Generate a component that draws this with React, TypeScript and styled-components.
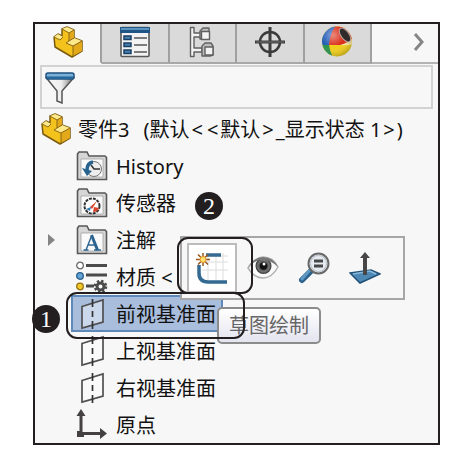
import React, { useState } from "react";
import styled, { createGlobalStyle } from "styled-components";

const GlobalStyle = createGlobalStyle`
  * { box-sizing: border-box; }
  body {
    margin: 0;
    background: #fff;
    color: #111;
    font-family: "Noto Sans", "Noto Sans CJK SC", sans-serif;
    font-size: 20px;
  }
  button { font: inherit; color: inherit; cursor: pointer; }
  svg { display: block; flex: none; }
`;

const Page = styled.main`
  padding: 22px 33px 15px;
`;

const Panel = styled.section`
  position: relative;
  border: 2px solid #231f20;
  background: #f7f7f7;
`;

const TabBar = styled.div`
  display: grid;
  grid-template-columns: repeat(5, minmax(0, 1fr)) 66px;
  height: 40px;
`;

const Tab = styled.button<{ $active?: boolean }>`
  display: flex;
  align-items: center;
  justify-content: center;
  min-width: 0;
  padding: 0 0 3px;
  border: 0;
  border-right: 2px solid #a0a0a0;
  border-bottom: 2px solid ${(p) => (p.$active ? "#f7f7f7" : "#a8a8a8")};
  background: ${(p) => (p.$active ? "#f7f7f7" : "#dadada")};
`;

const MoreButton = styled.button`
  display: flex;
  align-items: center;
  justify-content: flex-end;
  padding: 0 12px 3px 0;
  border: 0;
  border-bottom: 2px solid #b4b4b4;
  background: transparent;
`;

const FilterBox = styled.label`
  display: flex;
  align-items: center;
  gap: 8px;
  height: 44px;
  margin: 1px 5px;
  padding: 2px 3px 0;
  border: 2px solid #d2d2d2;
`;

const FilterInput = styled.input`
  flex: 1;
  min-width: 0;
  border: 0;
  outline: 0;
  background: transparent;
  font: inherit;
`;

const Tree = styled.ul`
  margin: 0;
  padding: 0;
  list-style: none;
`;

const TreeItem = styled.li<{ $root?: boolean }>`
  display: flex;
  align-items: center;
  height: 37px;
  padding-left: ${(p) => (p.$root ? 3 : 10)}px;
`;

const Expander = styled.span`
  display: flex;
  width: 26px;
  padding-left: 3px;
`;

const Node = styled.button<{ $selected?: boolean }>`
  display: flex;
  align-items: center;
  gap: 8px;
  height: 37px;
  padding: 0 5px 0 3px;
  border: 2px solid ${(p) => (p.$selected ? "#5f89b8" : "transparent")};
  background: ${(p) => (p.$selected ? "#a9bddc" : "transparent")};
  line-height: 28px;
  white-space: nowrap;
`;

const RootNode = styled(Node)`
  padding: 0;
  gap: 6px;
`;

const Label = styled.span`
  padding-top: 2px;
`;

const Config = styled(Label)`
  padding-left: 8px;
`;

const Bracket = styled.span`
  padding: 0 2px;
`;

const ContextBar = styled.div`
  position: absolute;
  left: 145px;
  top: 212px;
  display: flex;
  gap: 1px;
  width: 225px;
  padding: 5px;
  border: 2px solid #a6a6a6;
  background: #f7f7f7;
`;

const ToolButton = styled.button<{ $hot?: boolean }>`
  display: flex;
  align-items: center;
  justify-content: center;
  width: 50px;
  height: 50px;
  padding: 0;
  border: 2px solid ${(p) => (p.$hot ? "#bcbcbc" : "transparent")};
  background: ${(p) => (p.$hot ? "#fff" : "transparent")};
`;

const Tooltip = styled.div`
  position: absolute;
  left: 182px;
  top: 283px;
  height: 37px;
  padding: 0 10px;
  border: 2px solid #8c8c8c;
  border-radius: 5px;
  background: linear-gradient(#fff, #e4e4f0);
  color: #666;
  line-height: 34px;
`;

const Ring = styled.div<{ $x: number; $y: number; $w: number; $h: number }>`
  position: absolute;
  left: ${(p) => p.$x}px;
  top: ${(p) => p.$y}px;
  width: ${(p) => p.$w}px;
  height: ${(p) => p.$h}px;
  border: 2px solid #231f20;
  border-radius: 11px;
  pointer-events: none;
`;

const Badge = styled.span<{ $x: number; $y: number }>`
  position: absolute;
  left: ${(p) => p.$x}px;
  top: ${(p) => p.$y}px;
  width: 28px;
  height: 28px;
  border-radius: 50%;
  background: #231f20;
  color: #fff;
  font-family: "Liberation Serif", serif;
  font-size: 24px;
  line-height: 28px;
  text-align: center;
`;

const PartIcon = () => (
  <svg width="32" height="32" viewBox="0 0 32 32" strokeLinejoin="round">
    <path d="M2 11 6 8 10 10V3L15 1 22 4V12L30 15V25L20 31 3 21Z" fill="#f4c21c" stroke="#7a5a10" strokeWidth="1.5" />
    <path d="M10 3 15 1 22 4 17 7ZM2 11 6 8 11 11 8 14ZM14 17 22 12 30 15 21 20Z" fill="#fde88a" />
    <path d="M17 7 22 4V12L17 15ZM21 20 30 15V25L21 30Z" fill="#e3a91a" />
    <path d="m10 3 7 4v8l-3 2 7 3v10M17 7l5-3M21 20l9-5M2 11l6 3 3-3M17 15l5-3" fill="none" stroke="#8c6814" />
  </svg>
);

const PropertyIcon = () => (
  <svg width="32" height="32" viewBox="0 0 32 32">
    <rect x="2" y="1.5" width="28" height="29" rx="1" fill="#f3f3f3" stroke="#575757" strokeWidth="1.6" />
    <path d="M1 1h30v6H1z" fill="#1f5686" />
    <path d="M2 2h28v2H2z" fill="#5d91bd" />
    <g fill="#4a81ae" stroke="#173f66" strokeWidth="1.5">
      <rect x="5" y="10" width="7" height="3.5" />
      <rect x="5" y="17" width="7" height="3.5" />
      <rect x="5" y="24" width="7" height="3.5" />
    </g>
    <path d="M15 12h13M15 19h13M15 26h13" stroke="#555" strokeWidth="1.4" />
  </svg>
);

const ConfigurationIcon = () => (
  <svg width="26" height="32" viewBox="0 0 26 32" fill="#f2f2f2" stroke="#606060" strokeWidth="1.4" strokeLinejoin="round">
    <path d="M1.500 1.500H5V7h8v4H5v11h8v4H5v4.500H1.500Z" />
    <path d="m11 5 3-3h6v9l-3 2h-6Z" fill="#bdbdbd" />
    <rect x="12.500" y="5.500" width="8" height="8" />
    <path d="m13 20 3-3h6l2 3v9l-3 1h-8Z" fill="#bdbdbd" />
    <rect x="16" y="21" width="8" height="8" />
  </svg>
);

const CrosshairIcon = () => (
  <svg width="32" height="32" viewBox="0 0 32 32" fill="none" stroke="#3b3b3b">
    <circle cx="16" cy="16" r="10" strokeWidth="2.500" />
    <path d="M16 1v30M1 16h30" strokeWidth="3" />
    <path d="M2 16h28" stroke="#6f6f6f" />
  </svg>
);

const AppearanceIcon = () => (
  <svg width="34" height="34" viewBox="0 0 34 34">
    <defs>
      <clipPath id="ball"><circle cx="17" cy="16.500" r="15" /></clipPath>
      <radialGradient id="shade" cx="38%" cy="30%" r="70%">
        <stop offset="0" stopColor="#fff" stopOpacity=".45" />
        <stop offset=".5" stopColor="#fff" stopOpacity="0" />
        <stop offset="1" stopColor="#000" stopOpacity=".3" />
      </radialGradient>
    </defs>
    <g clipPath="url(#ball)">
      <path d="M0 0h34v34H0z" fill="#f1cf16" />
      <path d="M0 0h16L9 20H0z" fill="#245cb8" />
      <path d="M16 0h18v14q-4 6-8 6H9Q10 8 16 0Z" fill="#da2c16" />
      <path d="M0 20h9q1 8 5 14H0Z" fill="#26934b" />
      <path d="M34 11v8q-6 2-14 1 9-2 14-9Z" fill="#f7e79c" />
      <path d="M0 0h34v34H0z" fill="url(#shade)" />
    </g>
    <ellipse cx="25" cy="10" rx="4" ry="8" transform="rotate(-36 25 10)" fill="#302a2a" stroke="#b8a09a" />
  </svg>
);

const ChevronIcon = () => (
  <svg width="14" height="20" viewBox="0 0 14 20">
    <path d="m3 2 7 8-7 8" fill="none" stroke="#858585" strokeWidth="3" />
  </svg>
);

const FunnelIcon = () => (
  <svg width="30" height="32" viewBox="0 0 30 32">
    <defs>
      <linearGradient id="funnel"><stop stopColor="#f8f8f8" /><stop offset=".55" stopColor="#eee" /><stop offset="1" stopColor="#777" /></linearGradient>
    </defs>
    <path d="M1.500 6 12 19v10l5 2V19L28.500 6Z" fill="url(#funnel)" stroke="#555" strokeWidth="1.500" />
    <rect x="1" y="1" width="28" height="6" rx="2" fill="#7aafd8" stroke="#1c507d" strokeWidth="1.500" />
    <path d="M2 5.500h26" stroke="#24669b" strokeWidth="2" />
  </svg>
);

const Folder = ({ children }: { children: React.ReactNode }) => (
  <svg width="32" height="32" viewBox="0 0 32 32">
    <path d="M1.500 29.500V4L3 2h8l2 4h16l1.500 1.500v22Z" fill="#d6d6d6" stroke="#575757" strokeWidth="1.600" />
    <path d="M5 9h22v18H5z" fill="#fafafa" stroke="#999" strokeWidth=".7" />
    {children}
  </svg>
);

const HistoryIcon = () => (
  <Folder>
    <circle cx="18" cy="19" r="7.500" fill="#eee" stroke="#777" />
    <path d="m15 15 3 4h6" fill="none" stroke="#333" strokeWidth="1.500" />
    <path d="M17 12q-6 1-6 8" fill="none" stroke="#28628f" strokeWidth="3.500" />
    <path d="m6 18 10 3-5 5Z" fill="#28628f" />
  </Folder>
);

const SensorIcon = () => (
  <Folder>
    <circle cx="16" cy="19" r="7.500" fill="#fff" stroke="#333" strokeWidth="2" strokeDasharray="3 1" />
    <path d="m14 20 7-6-5 8Z" fill="#d8432b" />
    <path d="m17 25 1-5 5 1q-1 4-6 4Z" fill="#d8432b" />
    <path d="m10 22 5-2-1 4Z" fill="#347bb1" />
  </Folder>
);

const AnnotationIcon = () => (
  <Folder>
    <path d="M10 26 15.500 12M12 21h8M7.500 26h5M18 26h7" fill="none" stroke="#2c648f" strokeWidth="1.400" />
    <path d="m15.500 11 6 15" fill="none" stroke="#2c648f" strokeWidth="3" />
  </Folder>
);

const MaterialIcon = () => (
  <svg width="32" height="32" viewBox="0 0 32 32">
    <g strokeWidth="1.300">
      <circle cx="4" cy="4.500" r="3.300" fill="#fff" stroke="#666" />
      <circle cx="4" cy="15" r="3.300" fill="#62a4da" stroke="#285b83" />
      <circle cx="4" cy="25.500" r="3.300" fill="#f2c928" stroke="#94700f" />
    </g>
    <path d="M10 4.500h21M10 14h21M10 25h8" stroke="#4b4b4b" strokeWidth="3" />
    <circle cx="24.500" cy="25.500" r="5.500" fill="none" stroke="#4b4b4b" strokeWidth="2.500" strokeDasharray="2.300 2.020" />
    <circle cx="24.500" cy="25.500" r="3.500" fill="#f7f7f7" stroke="#4b4b4b" strokeWidth="3" />
  </svg>
);

const PlaneIcon = () => (
  <svg width="32" height="32" viewBox="0 0 32 32" fill="none" stroke="#505050" strokeWidth="1.700">
    <path d="M6 8.500 27 2v22L6 30Z" fill="#fff" fillOpacity=".4" />
    <path d="M16.500 1v8M16.500 13v6M16.500 23v8" stroke="#333" />
  </svg>
);

const OriginIcon = () => (
  <svg width="32" height="32" viewBox="0 0 32 32" fill="#454142">
    <path d="M5 0 9.500 7H6.500v16H24v-4l7 5.500-7 5.500v-4H8v2H1v-6h2.500V7H.5Z" />
  </svg>
);

const ExpandIcon = () => (
  <svg width="7" height="12" viewBox="0 0 7 12"><path d="m0 0 7 6-7 6Z" fill="#858585" /></svg>
);

const SketchIcon = () => (
  <svg width="32" height="32" viewBox="0 0 32 32" fill="none">
    <path d="M12 3v26M20 3v26M27 1v28M6 10h26M6 18h26M14 4h18" stroke="#ddd" />
    <path d="M10 3h15M3 13v8q0 9 9 9h19" stroke="#346a92" strokeWidth="3.500" />
    <path d="M7 1v13M0 7.500h14M2 2.500l10 10M12 2.500l-10 10" stroke="#98591c" strokeWidth="1.500" />
    <circle cx="7" cy="7.500" r="3" fill="#ffe06e" stroke="#e5932b" />
  </svg>
);

const EyeIcon = () => (
  <svg width="34" height="32" viewBox="0 0 34 32">
    <defs>
      <radialGradient id="iris"><stop offset="0" stopColor="#111" /><stop offset=".4" stopColor="#333" /><stop offset=".7" stopColor="#777" /><stop offset="1" stopColor="#333" /></radialGradient>
    </defs>
    <path d="M2 16Q10 5 17 5q10 0 15 10-6 11-15 11Q8 26 2 16Z" fill="#fafafa" stroke="#b0b0b0" strokeWidth="1.500" />
    <circle cx="17.500" cy="14" r="8" fill="url(#iris)" />
    <circle cx="17.500" cy="14" r="3.500" fill="#111" />
    <circle cx="18" cy="12" r="1.500" fill="#fff" />
    <path d="M1 16Q8 5 17 5q10 0 15 10-7-7-15-7Q8 8 1 16" fill="#777" />
  </svg>
);

const ZoomIcon = () => (
  <svg width="32" height="32" viewBox="0 0 32 32">
    <path d="m13 19-9 9" stroke="#2c5f89" strokeWidth="6" strokeLinecap="round" />
    <path d="m11 19-7 8" stroke="#5f9ac5" strokeWidth="3" strokeLinecap="round" />
    <circle cx="20.500" cy="11.500" r="10" fill="#e5ebf1" stroke="#696969" strokeWidth="2" />
    <circle cx="20.500" cy="11.500" r="8" fill="none" stroke="#b8bec4" />
    <path d="M16 9h9M16 14h9" stroke="#484848" strokeWidth="3" />
  </svg>
);

const NormalToIcon = () => (
  <svg width="32" height="32" viewBox="0 0 32 32">
    <path d="m1 21 21-3 9 4-20 9Z" fill="#4d88b5" stroke="#225076" strokeWidth="1.500" />
    <path d="m4 22 17-3 6 3" fill="none" stroke="#85b8da" strokeWidth="1.500" />
    <path d="M16 0 21 6h-3v17h-4V6h-3Z" fill="#494647" />
  </svg>
);

const tabs = [
  { label: "特征树", Icon: PartIcon },
  { label: "属性", Icon: PropertyIcon },
  { label: "配置", Icon: ConfigurationIcon },
  { label: "尺寸", Icon: CrosshairIcon },
  { label: "外观", Icon: AppearanceIcon },
];

const nodes = [
  { label: "History", Icon: HistoryIcon },
  { label: "传感器", Icon: SensorIcon },
  { label: "注解", Icon: AnnotationIcon, expandable: true },
  { label: "材质 <", Icon: MaterialIcon },
  { label: "前视基准面", Icon: PlaneIcon },
  { label: "上视基准面", Icon: PlaneIcon },
  { label: "右视基准面", Icon: PlaneIcon },
  { label: "原点", Icon: OriginIcon },
];

const tools = [
  { label: "草图绘制", Icon: SketchIcon },
  { label: "隐藏", Icon: EyeIcon },
  { label: "放大所选范围", Icon: ZoomIcon },
  { label: "正视于", Icon: NormalToIcon },
];

export default function App() {
  const [activeTab, setActiveTab] = useState(0);
  const [selected, setSelected] = useState("前视基准面");

  return (
    <>
      <GlobalStyle />
      <Page>
        <Panel>
          <TabBar role="tablist">
            {tabs.map(({ label, Icon }, i) => (
              <Tab key={label} role="tab" aria-label={label} aria-selected={i === activeTab} $active={i === activeTab} onClick={() => setActiveTab(i)}>
                <Icon />
              </Tab>
            ))}
            <MoreButton aria-label="更多"><ChevronIcon /></MoreButton>
          </TabBar>
          <FilterBox>
            <FunnelIcon />
            <FilterInput aria-label="过滤器" />
          </FilterBox>
          <Tree>
            <TreeItem $root>
              <RootNode>
                <PartIcon />
                <Label>零件3</Label>
                <Config>
                  (默认<Bracket>&lt;</Bracket><Bracket>&lt;</Bracket>默认<Bracket>&gt;</Bracket>_显示状态 1<Bracket>&gt;</Bracket>)
                </Config>
              </RootNode>
            </TreeItem>
            {nodes.map(({ label, Icon, expandable }) => (
              <TreeItem key={label}>
                <Expander>{expandable && <ExpandIcon />}</Expander>
                <Node $selected={label === selected} onClick={() => setSelected(label)}>
                  <Icon />
                  <Label>{label}</Label>
                </Node>
              </TreeItem>
            ))}
          </Tree>
          <ContextBar role="toolbar">
            {tools.map(({ label, Icon }, i) => (
              <ToolButton key={label} aria-label={label} $hot={i === 0}><Icon /></ToolButton>
            ))}
          </ContextBar>
          <Tooltip role="tooltip">草图绘制</Tooltip>
          <Ring $x={142} $y={213} $w={76} $h={57} />
          <Ring $x={31} $y={268} $w={179} $h={47} />
          <Badge $x={-3} $y={281}>1</Badge>
          <Badge $x={160} $y={168}>2</Badge>
        </Panel>
      </Page>
    </>
  );
}
